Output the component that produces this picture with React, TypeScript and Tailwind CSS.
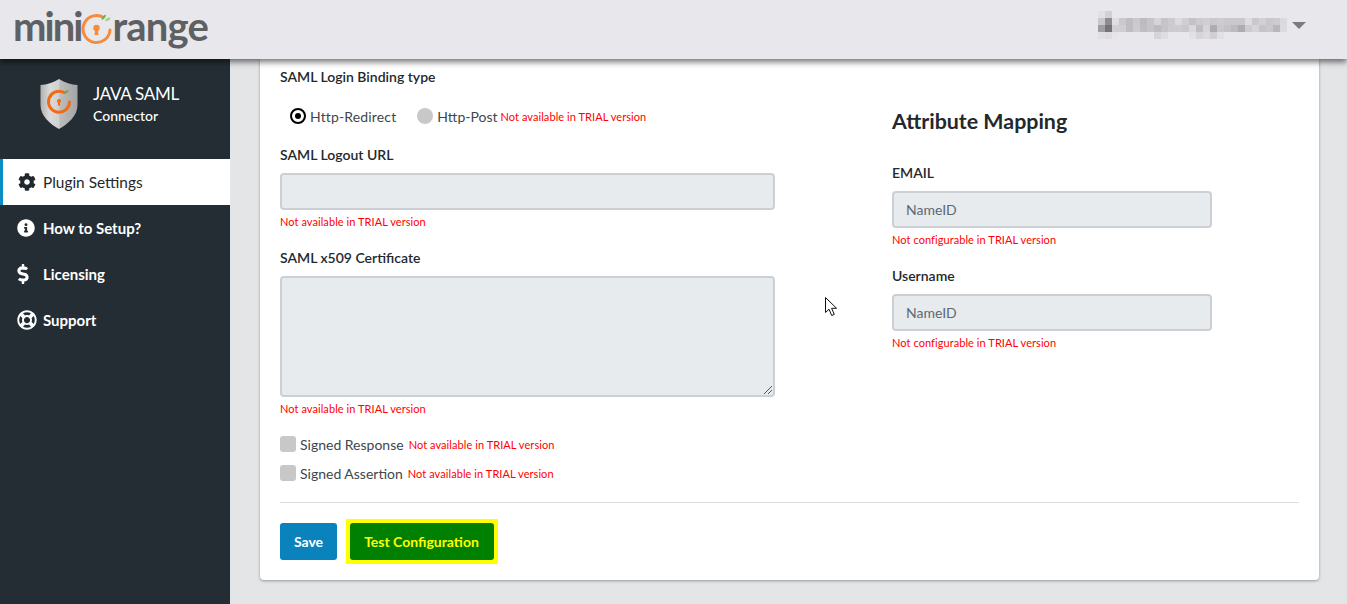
import { FaCog, FaDollarSign, FaInfoCircle, FaRegLifeRing } from "react-icons/fa";

const blurRows = [
  { y: 0, cells: ["#e2e0e5", "#d2d0d4"] },
  { y: 7, cells: ["#cac8cc", "#8f8c8f", "#e0dee3", "#cac8cc", "#bfbdc1", "#cac8cc", "#bdbbbf", "#c6c4c8", "#d6d4d8", "#c6c4c8", "#cdcbcf", "#dcdadf", "#d0ced2", "#c4c2c6", "#cdcbcf", "#d0ced2", "#cac8cc", "#cdcbcf", "#cac8cc", "#cac8cc", "#cac8cc", "#dedce1", "#cac8cc", "#d2d0d4", "#c9c7cb", "#cdcbcf", "#dcdadf"] },
  { y: 14, cells: ["#a19ea1", "#767376", "#d0ced2", "#d0ced2", "#bfbdc1", "#cdcbcf", "#bfbdc1", "#c6c4c8", "#bdbbbf", "#c6c4c8", "#cdcbcf", "#cdcbcf", "#cac8cc", "#dad8dc", "#bfbdc1", "#d6d4d8", "#aeacb0", "#c9c7cb", "#c4c2c6", "#bdbbbf", "#aeacb0", "#cdcbcf", "#d6d4d8", "#c6c4c8", "#cac8cc", "#b9b7bb", "#dcdadf"] },
  { y: 21, cells: ["#e2e0e5", "#dedce1", "#e6e4e9", "", "", "", "", "", "#d6d4d8", "#dedce1", "", "", "", "#e2e0e5", "#d6d4d8", "#dcdadf", "#d0ced2", "#e2e0e5"] },
];

function Notice({ children, className = "" }: { children: string; className?: string }) {
  return <span className={`block text-[11px] leading-[11px] tracking-[0.07px] text-[#ff0000] ${className}`}>{children}</span>;
}

function FieldLabel({ children }: { children: string }) {
  return <div className="text-[14px] font-semibold leading-[20px] text-[#23282c]">{children}</div>;
}

function DisabledBox({ value, className = "" }: { value?: string; className?: string }) {
  return (
    <div className={`flex items-center rounded-[4px] border-2 border-[#ccd0d5] bg-[#e8ebee] px-3 text-[14px] text-[#5c6873] ${className}`}>
      {value}
    </div>
  );
}

function Logo() {
  return (
    <div className="mb-[7px] ml-[-2px] flex items-start text-[40px] font-bold leading-[48px] text-[#5f6062]">
      <span className="tracking-[-2px]">mini</span>
      <svg width="31" height="33" viewBox="0 0 31 33" className="mt-[11px]">
        <path d="M20.500 3.500A13.500 13.500 0 1 0 29 17" fill="none" stroke="#f58b3c" strokeWidth="3" strokeLinecap="round" />
        <circle cx="15.500" cy="15" r="3.200" fill="#f58b3c" />
        <path d="M14.300 16h2.400l.8 6h-4z" fill="#f58b3c" />
        <path d="M20.500 7c.2-3 2-5 4.300-5.500.2 2.800-1.500 5-4.300 5.500z" fill="#6fae45" />
        <path d="M24 8c.6-2 2.400-3.500 5.500-3.500-.7 2.500-2.500 4-5.500 3.500z" fill="#9ccf72" />
      </svg>
      <span className="tracking-[-0.8px]">range</span>
    </div>
  );
}

function ShieldLogo() {
  return (
    <svg width="40" height="52" viewBox="0 0 40 52">
      <defs>
        <linearGradient id="steel" x1="0" x2="1" y1="0" y2="0">
          <stop offset="0" stopColor="#b0b0b0" />
          <stop offset="0.25" stopColor="#dadada" />
          <stop offset="0.5" stopColor="#d0d0d0" />
          <stop offset="0.52" stopColor="#bdbdbd" />
          <stop offset="1" stopColor="#a4a4a4" />
        </linearGradient>
      </defs>
      <path d="M20 1 C26 5 32 6.500 38.500 7 V27 C38.500 38 29 46 20 51 C11 46 1.500 38 1.500 27 V7 C8 6.500 14 5 20 1z" fill="url(#steel)" />
      <path d="M25 14.500A10.500 10.500 0 1 0 30.500 24" fill="none" stroke="#f26a12" strokeWidth="3" strokeLinecap="round" />
      <circle cx="20" cy="23" r="2" fill="#f26a12" />
      <path d="M19.200 24h1.600l.4 3.500h-2.400z" fill="#f26a12" />
      <path d="M25 16c.3-2.500 2.200-4 4.800-4.200-.2 2.500-2 4.300-4.800 4.200z" fill="#6fae45" />
    </svg>
  );
}

const navItems = [
  { label: "How to Setup?", icon: <FaInfoCircle className="h-[18px] w-[18px]" /> },
  { label: "Licensing", icon: <FaDollarSign className="ml-[-1px] h-[20px] w-[14px]" /> },
  { label: "Support", icon: <FaRegLifeRing className="h-[20px] w-[20px]" /> },
];

export default function App() {
  return (
    <div className="relative flex h-[604px] w-[1347px] flex-col overflow-hidden bg-[#e4e5e6] font-['Lato',sans-serif]">
      {/* Header */}
      <header className="relative z-10 flex h-[59px] shrink-0 items-center justify-between bg-[#e8e7ec] pl-[15px] pr-[41px] shadow-[0_3px_6px_rgba(0,0,0,0.55)]">
        <Logo />
        <div className="flex items-center gap-[2px]">
          <svg width="192" height="28" viewBox="0 0 192 28" className="mt-[-9px]">
            {blurRows.map((row) =>
              row.cells.map((fill, i) =>
                fill ? <rect key={`${row.y}-${i}`} x={i * 7} y={row.y} width="7" height="7" fill={fill} /> : null
              )
            )}
          </svg>
          <div className="mt-[-9px] h-0 w-0 border-x-[7px] border-t-[7px] border-x-transparent border-t-[#7c7a7c]" />
        </div>
      </header>

      <div className="flex min-h-0 flex-1">
        {/* Sidebar */}
        <aside className="w-[230px] shrink-0 bg-[#232d33] text-white">
          <div className="flex h-[100px] items-start pl-[39px] pt-[19px]">
            <ShieldLogo />
            <div className="ml-[14px] pt-[5px]">
              <div className="text-[17px] leading-[22px] tracking-[-0.3px]">JAVA SAML</div>
              <div className="mt-[1px] text-[14px] font-medium leading-[20px]">Connector</div>
            </div>
          </div>
          <div className="flex h-[46px] items-center border-l-[3px] border-[#0a8ec4] bg-white pl-[15px] text-[15.4px] text-[#23282c]">
            <FaCog className="h-[18px] w-[18px]" />
            <span className="ml-[7px] pt-[1px]">Plugin Settings</span>
          </div>
          {navItems.map((item) => (
            <div key={item.label} className="flex h-[46px] items-center pl-[17px] text-[15px] font-bold">
              <span className="flex w-[26px] items-center">{item.icon}</span>
              <span className="pt-[1px]">{item.label}</span>
            </div>
          ))}
        </aside>

        {/* Form card */}
        <main className="min-w-0 flex-1 pl-[30px] pr-[28px]">
          <section className="h-[521px] rounded-b-[4px] bg-white px-5 pt-2 shadow-[0_1px_3px_rgba(0,0,0,0.35)]">
            <div className="grid h-[435px] grid-cols-[495px_320px] gap-x-[117px]">
              <div>
                <FieldLabel>SAML Login Binding type</FieldLabel>
                <div className="mt-[19px] flex h-[20px] items-center pl-[10px] text-[14px] text-[#3e474e]">
                  <span className="flex h-[16px] w-[16px] items-center justify-center rounded-full border-2 border-black">
                    <span className="h-[6px] w-[6px] rounded-full bg-black" />
                  </span>
                  <span className="ml-[4px] tracking-[0.15px]">Http-Redirect</span>
                  <span className="ml-[21px] h-[16px] w-[16px] rounded-full bg-[#c8c8c8]" />
                  <span className="ml-[4px]">Http-Post</span>
                  <Notice className="ml-[3px]">Not available in TRIAL version</Notice>
                </div>
                <div className="mt-[19px]"><FieldLabel>SAML Logout URL</FieldLabel></div>
                <DisabledBox className="mt-2 h-[37px]" />
                <Notice className="mt-[6px]">Not available in TRIAL version</Notice>
                <div className="mt-[21px]"><FieldLabel>SAML x509 Certificate</FieldLabel></div>
                <div className="relative mt-2">
                  <DisabledBox className="h-[121px]" />
                  <svg width="10" height="10" viewBox="0 0 10 10" className="absolute bottom-[2px] right-[2px]">
                    <path d="M1 9 9 1M5 9 9 5" stroke="#555" strokeWidth="1" />
                  </svg>
                </div>
                <Notice className="mt-[6px]">Not available in TRIAL version</Notice>
                <div className="mt-[22px] flex h-[16px] items-center text-[14px] text-[#3e474e]">
                  <span className="h-[16px] w-[16px] rounded-[3px] bg-[#c8c8c8]" />
                  <span className="ml-1">Signed Response</span>
                  <Notice className="ml-[5px] mt-[1px]">Not available in TRIAL version</Notice>
                </div>
                <div className="mt-[13px] flex h-[16px] items-center text-[14px] text-[#3e474e]">
                  <span className="h-[16px] w-[16px] rounded-[3px] bg-[#c8c8c8]" />
                  <span className="ml-1">Signed Assertion</span>
                  <Notice className="ml-[5px] mt-[1px]">Not available in TRIAL version</Notice>
                </div>
              </div>

              <div className="pt-[40px]">
                <h2 className="text-[21.4px] font-bold leading-[28px] text-[#23282c]">Attribute Mapping</h2>
                <div className="mt-[28px]"><FieldLabel>EMAIL</FieldLabel></div>
                <DisabledBox value="NameID" className="mt-2 h-[37px]" />
                <Notice className="mt-[6px]">Not configurable in TRIAL version</Notice>
                <div className="mt-[21px]"><FieldLabel>Username</FieldLabel></div>
                <DisabledBox value="NameID" className="mt-2 h-[37px]" />
                <Notice className="mt-[6px]">Not configurable in TRIAL version</Notice>
              </div>
            </div>

            <div className="border-t border-[#dcdfe2] pt-[16px]">
              <div className="flex items-center gap-[9px]">
                <button className="h-[37px] w-[57px] rounded-[3px] bg-[#0a83bd] text-[14px] font-bold text-white">Save</button>
                <div className="bg-[#ffff00] p-1">
                  <button className="block h-[37px] w-[144px] rounded-[3px] bg-[#008000] pr-[1px] text-[14px] font-bold text-[#ffff00]">
                    Test Configuration
                  </button>
                </div>
              </div>
            </div>
          </section>
        </main>
      </div>

      {/* Mouse pointer caught in the capture */}
      <svg width="13" height="20" viewBox="0 0 13 20" className="absolute left-[825px] top-[297px]">
        <path d="M.5.5v15l3.500-3.300 2.700 6.300 2.600-1.100-2.700-6.100h5z" fill="#fff" stroke="#111" strokeWidth="1" />
      </svg>
    </div>
  );
}
